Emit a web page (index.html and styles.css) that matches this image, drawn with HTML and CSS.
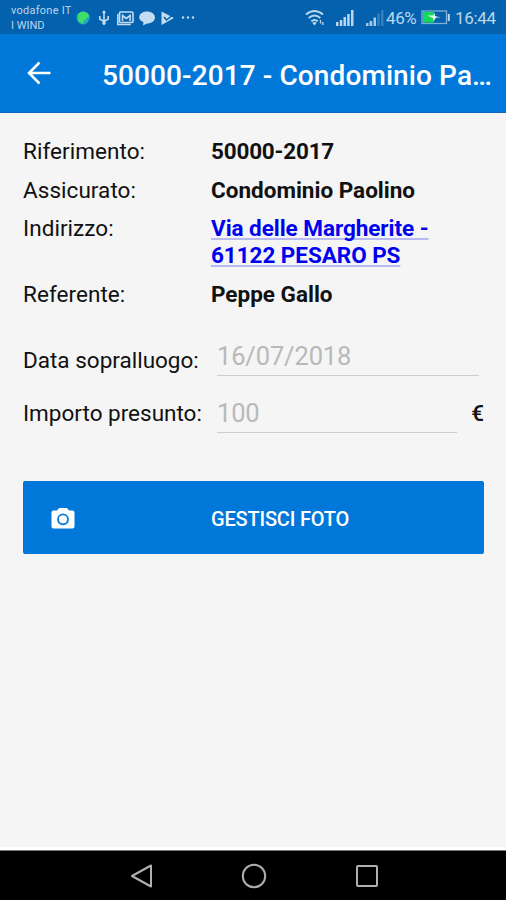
FILE: index.html
```html
<!DOCTYPE html>
<html lang="it">
<head>
<meta charset="utf-8">
<title>50000-2017 - Condominio Paolino</title>
<link rel="stylesheet" href="styles.css">
</head>
<body>
<div class="screen">
  <header class="status">
    <div class="carriers"><span class="carrier">vodafone IT</span><span class="carrier second">I WIND</span></div>
    <svg class="notifications" width="122" height="18" viewBox="0 0 122 18">
      <circle cx="7" cy="9" r="6.5" fill="#20a9bd"/>
      <path d="M1.500 6q4-6 10-2l2 3-5 4-2 4-4-3z" fill="#3dde69"/>
      <g fill="none" stroke="#c3dcf1" stroke-width="1.6">
        <path d="M28 3v13M23.800 7v3l4.200 2.500 4.200-2.500V7"/>
        <path d="M41.800 5v10.500h13" stroke-width="1.500"/>
        <rect x="43.500" y="3" width="13.500" height="10.500" rx="1"/>
        <path d="M46.500 12V6.500l3.800 3 3.800-3V12"/>
      </g>
      <path d="M28 1l2 3h-4z" fill="#c3dcf1"/><circle cx="28" cy="14" r="1.800" fill="#c3dcf1"/>
      <path d="M71 2.500c4.500 0 8 2.600 8 6s-3.500 6-8 6l-4 2 .5-3.200C65 12.200 63.200 10.500 63.200 8.500c0-3.400 3.300-6 7.800-6z" fill="#c3dcf1"/>
      <path d="M85.500 2.500L98 9 85.500 16z" fill="#c3dcf1"/>
      <path d="M88 8l2.500 3L98 5" fill="none" stroke="#0461ad" stroke-width="1.500"/>
      <g fill="#c3dcf1"><circle cx="107" cy="8.500" r="1.200"/><circle cx="112" cy="8.500" r="1.200"/><circle cx="117" cy="8.500" r="1.200"/></g>
    </svg>
    <svg class="wifi" width="20" height="18" viewBox="0 0 20 18" fill="none" stroke="#bcd6ec" stroke-width="1.900">
      <path d="M1 5.500q8.500-7 17 0M3.700 9q5.800-4.800 11.600 0M6.300 12.300q3.200-2.600 6.400 0"/>
      <path d="M9.500 16.500l-2.300-2.700q2.300-1.500 4.600 0z" fill="#bcd6ec" stroke="none"/>
      <path d="M15.500 11v3.500M17.800 13v3" stroke-width="1.300"/>
    </svg>
    <svg class="signal" width="18" height="16" viewBox="0 0 18 16" fill="#bcd6ec"><path d="M0 12h2.500v4H0zM3.800 10h2.500v6H3.800zM7.500 7H10v9H7.500zM11.200 4h2.500v12h-2.500zM15 0h2.500v16H15z"/></svg>
    <svg class="signal weak" width="18" height="16" viewBox="0 0 18 16" fill="#a9cae6"><path d="M0 13h2.500v3H0zM3.600 11h2.600v5H3.600zM7.500 7.500H10V16H7.500z"/><path d="M11.200 3.500h2.500V16h-2.500zM15 0h2.500v16H15z" fill="#347fbc"/></svg>
    <span class="percent">46%</span>
    <svg class="battery" width="30" height="15" viewBox="0 0 30 15">
      <rect x="1" y="1" width="24.500" height="12.500" fill="none" stroke="#7fb0d8" stroke-width="1.300"/>
      <path d="M2 2h11v10.500H2z" fill="#12d957"/><path d="M26.800 4h2v7h-2z" fill="#bcd6ec"/>
      <path d="M6.500 5.500h5.500L14 3v3l5.500 1.500h-4.500L12.500 11.500V8.500z" fill="#e6fff1"/>
    </svg>
    <span class="clock">16:44</span>
  </header>
  <nav class="appbar">
    <svg class="back" width="24" height="24" viewBox="0 0 24 24" fill="none" stroke="#fff" stroke-width="2.500"><path d="M23.500 12H2M12.500 1.500L2 12l10.500 10.500"/></svg>
    <h1 class="title">50000-2017 - Condominio Pa…</h1>
  </nav>
  <main class="content">
    <dl class="details">
      <dt>Riferimento:</dt><dd class="reference">50000-2017</dd>
      <dt>Assicurato:</dt><dd>Condominio Paolino</dd>
      <dt>Indirizzo:</dt><dd><a class="address">Via delle Margherite -<br>61122 PESARO PS</a></dd>
      <dt>Referente:</dt><dd>Peppe Gallo</dd>
    </dl>
    <div class="form">
      <div class="field date"><span class="label">Data sopralluogo:</span><span class="input">16/07/2018</span></div>
      <div class="field amount"><span class="label">Importo presunto:</span><span class="input">100</span><span class="unit">€</span></div>
    </div>
    <div class="button">
      <svg class="camera" width="24" height="22" viewBox="0 0 24 22"><path d="M8 1h8l2 2.500h3.500A2 2 0 0 1 23.500 5.500v14a2 2 0 0 1-2 2h-19a2 2 0 0 1-2-2v-14a2 2 0 0 1 2-2H6z" fill="#fff"/><circle cx="12" cy="12.300" r="5" fill="none" stroke="#0078d9" stroke-width="1.800"/></svg>
      <span class="button-text">GESTISCI FOTO</span>
    </div>
  </main>
  <footer class="navbar">
    <svg width="24" height="26" viewBox="0 0 24 26"><path d="M21 2.500v21L2 13z"/></svg>
    <svg width="26" height="26" viewBox="0 0 26 26"><circle cx="13" cy="13" r="11.200"/></svg>
    <svg width="22" height="26" viewBox="0 0 22 26"><rect x="1" y="3" width="20" height="20" rx="1"/></svg>
  </footer>
</div>
</body>
</html>
```
FILE: styles.css
```css
* { box-sizing: border-box; }
body { margin: 0; font-family: Roboto, "Liberation Sans", sans-serif; }
.screen { width: 506px; height: 900px; display: flex; flex-direction: column; background: #f5f5f5; overflow: hidden; color: #111; }

.status { height: 34px; flex: none; background: #0461ad; color: #bcd6ec; display: flex; align-items: center; padding: 1px 0 0 11px; }
.carriers { width: 65px; display: flex; flex-direction: column; font-size: 11px; line-height: 15px; letter-spacing: 0.25px; white-space: nowrap; }
.second { letter-spacing: 0; }
.notifications { flex: none; }
.wifi { margin-left: 107px; flex: none; }
.signal { margin-left: 11px; flex: none; }
.weak { margin-left: 12px; }
.percent { margin-left: 2px; width: 35px; font-size: 17px; white-space: nowrap; letter-spacing: -0.4px; }
.battery { flex: none; }
.clock { margin-left: 4px; font-size: 17px; letter-spacing: -0.3px; }

.appbar { height: 79px; flex: none; background: #0078d9; border-bottom: 1px solid #1268ba; display: flex; align-items: center; padding-left: 27px; color: #fff; }
.back { margin-bottom: 1px; flex: none; }
.title { margin: 6px 0 0 51px; font-size: 28px; font-weight: 500; line-height: 34px; letter-spacing: 0.1px; white-space: nowrap; }

.content { flex: 1; padding: 25px 22px 0 23px; border-bottom: 3px solid #fff; }
.details { margin: 0; display: grid; grid-template-columns: 188px 1fr; row-gap: 12.2px; font-size: 22.5px; line-height: 26.5px; }
.details dt { letter-spacing: 0.05px; }
.details dd { margin: 0; font-weight: 700; white-space: nowrap; }
.details .reference { letter-spacing: -0.2px; }
.address { color: #0000f0; text-decoration: underline; text-decoration-color: #b9b9f4; text-decoration-thickness: 1.5px; text-underline-offset: 2px; text-decoration-skip-ink: none; letter-spacing: -0.05px; }

.form { margin-top: 29px; display: flex; flex-direction: column; gap: 17px; font-size: 22.5px; }
.field { height: 40px; display: flex; align-items: center; }
.label { width: 194px; flex: none; white-space: nowrap; }
.date .label { padding-top: 7px; }
.input { width: 262px; height: 40px; border-bottom: 1.5px solid #cecece; color: #b9b9b9; font-size: 25.5px; line-height: 40px; letter-spacing: -0.15px; }
.amount .input { width: 241px; }
.unit { margin-left: 14px; font-weight: 500; }

.button { margin-top: 48px; height: 73px; border-radius: 2px; background: #0078d9; display: flex; align-items: center; padding-left: 28px; color: #fff; }
.camera { flex: none; }
.button-text { margin: 2px 0 0 136px; font-size: 20px; font-weight: 500; letter-spacing: -0.2px; white-space: nowrap; }

.navbar { height: 50px; flex: none; background: #000; border-top: 1px solid #777; display: flex; align-items: center; padding-left: 130px; }
.navbar svg { fill: none; stroke: #b0b0b0; stroke-width: 2; stroke-linejoin: round; }
.navbar svg + svg { margin-left: 87px; }
.navbar svg + svg + svg { margin-left: 89px; }
```
